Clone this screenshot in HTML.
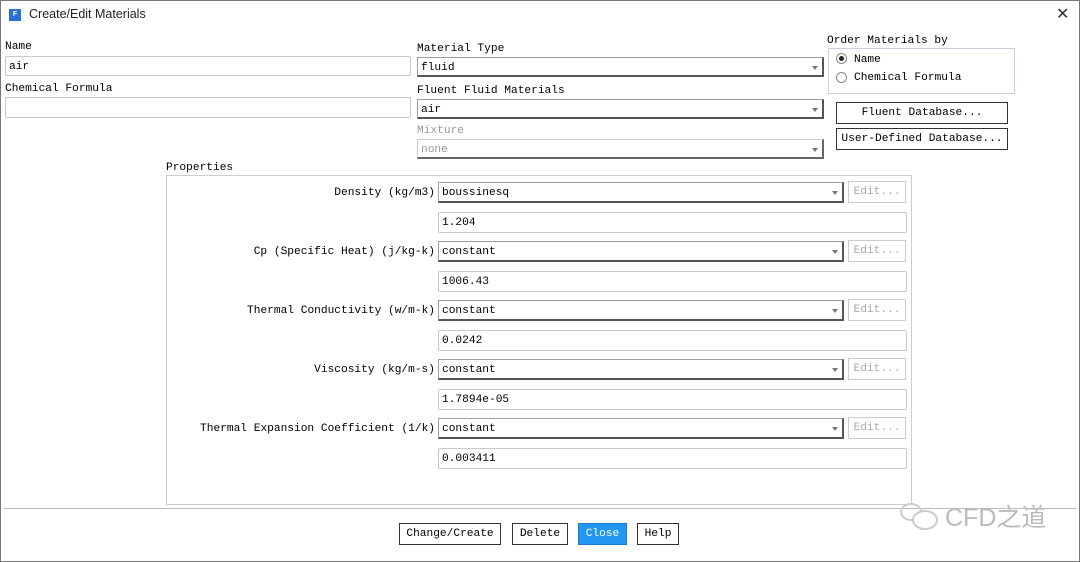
<!DOCTYPE html>
<html><head><style>
body{margin:0;width:1080px;height:562px;background:#fff;position:relative;overflow:hidden;font-family:"Liberation Mono","Noto Sans CJK SC",monospace;font-size:11.2px;color:#000}
.a{position:absolute;white-space:nowrap}
.in{position:absolute;border:1px solid #c8c8c8;border-radius:2px;background:#fff;box-sizing:border-box;padding-left:3px;line-height:20px}
.dd{position:absolute;border:1px solid #a0a0a0;box-sizing:border-box;background:#fff;padding-left:3px;line-height:20px;border-right:2px solid #555;border-bottom:2px solid #555}
.dd:after{content:"";position:absolute;right:4px;top:8px;border-left:3px solid transparent;border-right:3px solid transparent;border-top:4px solid #777}
.btn{position:absolute;border:1px solid #333;box-sizing:border-box;background:#fff;text-align:center;line-height:21px}
.ed{position:absolute;border:1px solid #ccc;box-sizing:border-box;color:#aaa;text-align:center;line-height:20px;width:58px;height:22px;left:848px}
.lab{position:absolute;right:645px;text-align:right;white-space:nowrap}
</style></head><body>
<div class="a" style="left:0;top:0;width:1080px;height:562px;border:1px solid #777;box-sizing:border-box"></div>
<div class="a" style="left:9px;top:9px;width:12px;height:12px;background:#2a6fd6;color:#fff;font:bold 7px 'Liberation Sans';text-align:center;line-height:12px">F</div>
<div class="a" style="left:29px;top:7px;font:12.5px 'Liberation Sans',sans-serif;color:#222">Create/Edit Materials</div>
<div class="a" style="left:1056px;top:4px;font:16px 'Liberation Sans';color:#333">✕</div>

<div class="a" style="left:5px;top:41px">Name</div>
<div class="in" style="left:5px;top:56px;width:406px;height:20px">air</div>
<div class="a" style="left:5px;top:83px">Chemical Formula</div>
<div class="in" style="left:5px;top:97px;width:406px;height:21px"></div>

<div class="a" style="left:417px;top:43px">Material Type</div>
<div class="dd" style="left:417px;top:57px;width:407px;height:20px">fluid</div>
<div class="a" style="left:417px;top:85px">Fluent Fluid Materials</div>
<div class="dd" style="left:417px;top:99px;width:407px;height:20px">air</div>
<div class="a" style="left:417px;top:125px;color:#999">Mixture</div>
<div class="dd" style="left:417px;top:139px;width:407px;height:20px;color:#999;border-color:#ccc;border-right-color:#666;border-bottom-color:#666">none</div>

<div class="a" style="left:827px;top:35px">Order Materials by</div>
<div class="a" style="left:828px;top:48px;width:187px;height:46px;border:1px solid #ccd;box-sizing:border-box"></div>
<div class="a" style="left:836px;top:53px;width:11px;height:11px;border:1px solid #888;border-radius:50%;box-sizing:border-box"><div style="margin:2px;width:5px;height:5px;border-radius:50%;background:#222"></div></div>
<div class="a" style="left:854px;top:54px">Name</div>
<div class="a" style="left:836px;top:72px;width:11px;height:11px;border:1px solid #888;border-radius:50%;box-sizing:border-box"></div>
<div class="a" style="left:854px;top:72px">Chemical Formula</div>
<div class="btn" style="left:836px;top:102px;width:172px;height:22px">Fluent Database...</div>
<div class="btn" style="left:836px;top:128px;width:172px;height:22px">User-Defined Database...</div>

<div class="a" style="left:166px;top:162px">Properties</div>
<div class="a" style="left:166px;top:175px;width:746px;height:330px;border:1px solid #ccc;box-sizing:border-box"></div>

<div class="lab" style="top:187px">Density (kg/m3)</div>
<div class="dd" style="left:438px;top:182px;width:406px;height:21px">boussinesq</div>
<div class="ed" style="top:181px">Edit...</div>
<div class="in" style="left:438px;top:212px;width:469px;height:21px">1.204</div>

<div class="lab" style="top:246px">Cp (Specific Heat) (j/kg-k)</div>
<div class="dd" style="left:438px;top:241px;width:406px;height:21px">constant</div>
<div class="ed" style="top:240px">Edit...</div>
<div class="in" style="left:438px;top:271px;width:469px;height:21px">1006.43</div>

<div class="lab" style="top:305px">Thermal Conductivity (w/m-k)</div>
<div class="dd" style="left:438px;top:300px;width:406px;height:21px">constant</div>
<div class="ed" style="top:299px">Edit...</div>
<div class="in" style="left:438px;top:330px;width:469px;height:21px">0.0242</div>

<div class="lab" style="top:364px">Viscosity (kg/m-s)</div>
<div class="dd" style="left:438px;top:359px;width:406px;height:21px">constant</div>
<div class="ed" style="top:358px">Edit...</div>
<div class="in" style="left:438px;top:389px;width:469px;height:21px">1.7894e-05</div>

<div class="lab" style="top:423px">Thermal Expansion Coefficient (1/k)</div>
<div class="dd" style="left:438px;top:418px;width:406px;height:21px">constant</div>
<div class="ed" style="top:417px">Edit...</div>
<div class="in" style="left:438px;top:448px;width:469px;height:21px">0.003411</div>

<div class="a" style="left:4px;top:508px;width:1072px;height:0;border-top:1px solid #bbb"></div>
<div class="btn" style="left:399px;top:523px;width:102px;height:22px">Change/Create</div>
<div class="btn" style="left:512px;top:523px;width:56px;height:22px">Delete</div>
<div class="btn" style="left:578px;top:523px;width:49px;height:22px;background:#2196f3;color:#fff;border-color:#1a7ad0">Close</div>
<div class="btn" style="left:637px;top:523px;width:42px;height:22px">Help</div>
<div class="a" style="left:945px;top:498px;font:25px 'Liberation Sans','Noto Sans CJK SC',sans-serif;color:#bbb">CFD之道</div>
<div class="a" style="left:900px;top:503px;width:22px;height:18px;border:2px solid #ccc;border-radius:50%;box-sizing:border-box"></div>
<div class="a" style="left:912px;top:510px;width:26px;height:20px;border:2px solid #ccc;border-radius:50%;box-sizing:border-box;background:#fff"></div>
</body></html>
